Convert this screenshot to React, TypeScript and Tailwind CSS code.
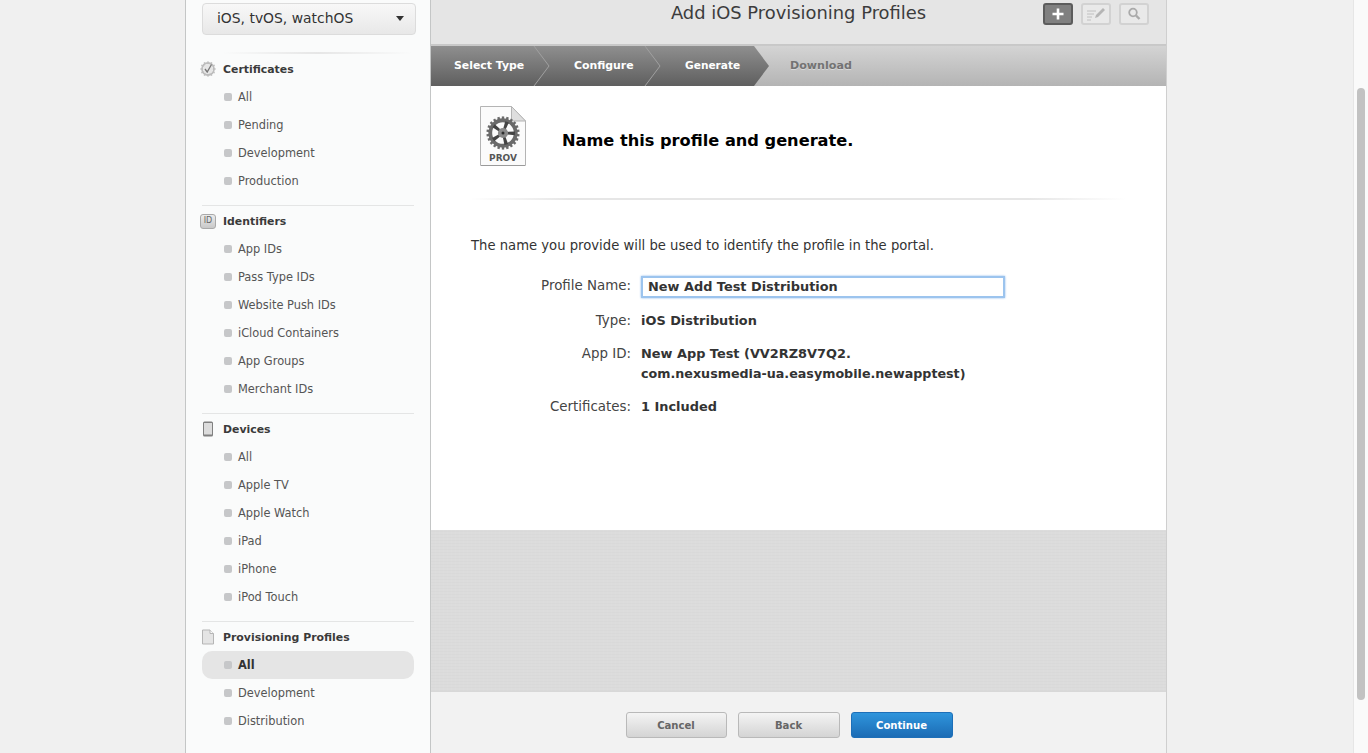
import React from 'react';

const lucida = { fontFamily: '"DejaVu Sans", sans-serif' };

const sections = [
  { title: 'Certificates', icon: 'cert', items: ['All', 'Pending', 'Development', 'Production'] },
  { title: 'Identifiers', icon: 'id', items: ['App IDs', 'Pass Type IDs', 'Website Push IDs', 'iCloud Containers', 'App Groups', 'Merchant IDs'] },
  { title: 'Devices', icon: 'device', items: ['All', 'Apple TV', 'Apple Watch', 'iPad', 'iPhone', 'iPod Touch'] },
  { title: 'Provisioning Profiles', icon: 'doc', items: ['All', 'Development', 'Distribution'] },
];

const Gear: React.FC<{ size: number; ring: string; spoke: string; teeth: number }> = ({ size, ring, spoke, teeth }) => {
  const cogs = Array.from({ length: teeth }, (_, i) => (i * 360) / teeth);
  return (
    <svg width={size} height={size} viewBox="0 0 40 40">
      {cogs.map((a) => (
        <rect key={a} x="18.6" y="0.5" width="2.8" height="6" fill={ring} transform={`rotate(${a} 20 20)`} />
      ))}
      <circle cx="20" cy="20" r="15" fill="none" stroke={ring} strokeWidth="4.5" />
      {[20, 92, 164, 236, 308].map((a) => (
        <path key={a} d="M17.8 6h4.4l-1 14h-2.4z" fill={spoke} transform={`rotate(${a} 20 20)`} />
      ))}
      <circle cx="20" cy="20" r="6" fill="#8a8a8a" />
      <circle cx="20" cy="20" r="1.8" fill="#2e2e2e" />
    </svg>
  );
};

const SectionIcon: React.FC<{ kind: string }> = ({ kind }) => {
  if (kind === 'cert') {
    return (
      <span className="relative flex h-4 w-4 items-center justify-center">
        <Gear size={16} ring="#bdbdbd" spoke="#bdbdbd" teeth={12} />
        <svg className="absolute inset-0" width="16" height="16" viewBox="0 0 16 16">
          <circle cx="8" cy="8" r="5" fill="#e6e6e6" />
          <path d="M5 8l2.2 3L11.5 3.5" fill="none" stroke="#777" strokeWidth="1.3" />
        </svg>
      </span>
    );
  }
  if (kind === 'id') {
    return (
      <span className="flex h-[15px] w-[16px] items-center justify-center rounded-[3px] border border-[#a9a9a9] bg-gradient-to-b from-[#ececec] to-[#c8c8c8] text-[8px] font-normal leading-none text-[#666]">
        ID
      </span>
    );
  }
  if (kind === 'device') {
    return (
      <svg width="16" height="16" viewBox="0 0 16 16">
        <rect x="3" y="0.5" width="10" height="15" rx="1.5" fill="#808080" />
        <rect x="4" y="2" width="8" height="11.5" fill="#dcdcdc" />
      </svg>
    );
  }
  return (
    <svg width="16" height="16" viewBox="0 0 16 16">
      <path d="M2.5 1h7.5l3.5 3.5V15h-11z" fill="#e4e4e4" stroke="#b5b5b5" />
      <path d="M10 1v3.5h3.5" fill="#fafafa" stroke="#b5b5b5" />
    </svg>
  );
};

const Sidebar: React.FC = () => (
  <aside className="w-[246px] shrink-0 border-x border-[#c4c6c6] bg-[#fafbfb] pl-[16px] pr-[16px]">
    <div className="mt-[3px] flex h-[32px] w-[214px] items-center justify-between rounded-[4px] border border-[#dcdcdc] bg-gradient-to-b from-[#f8f8f8] to-[#e8e8e8] pb-[1px] pl-[14px] pr-[11px] text-[13.9px] text-[#333]" style={lucida}>
      <span>iOS, tvOS, watchOS</span>
      <span className="h-0 w-0 border-x-[4.5px] border-t-[5px] border-x-transparent border-t-[#333]" />
    </div>
    <div className="ml-[20px] mt-[17px] h-[2px] w-[190px] bg-gradient-to-r from-transparent via-[#e6e6e6] to-transparent" />
    {sections.map((s, i) => (
      <section key={s.title} className={i < sections.length - 1 ? 'w-[212px] border-b border-[#e4e5e5] pb-[10px] pt-[1px]' : 'w-[212px] pt-[1px]'}>
        <div className="flex h-[28px] items-center text-[10.9px] font-bold text-[#3a3a3a]" style={lucida}>
          <span className="-ml-[2px] mr-[7px] flex w-[16px] justify-center"><SectionIcon kind={s.icon} /></span>
          <span className="pt-[2px]">{s.title}</span>
        </div>
        {s.items.map((item, j) => {
          const active = s.title === 'Provisioning Profiles' && j === 0;
          return (
            <div key={item} className={`flex h-[28px] items-center pl-[22px] text-[11.4px] ${active ? 'rounded-[10px] bg-[#e5e5e5] font-bold text-[#333]' : 'text-[#555]'}`} style={lucida}>
              <span className="mr-[6px] h-[8px] w-[8px] rounded-[2px] bg-[#c6c7c9]" />
              <span className="pt-[2px]">{item}</span>
            </div>
          );
        })}
      </section>
    ))}
  </aside>
);

const Steps: React.FC = () => (
  <div className="relative h-[41px] border-t border-[#c9c9c9] bg-gradient-to-b from-[#d4d4d4] to-[#b4b4b4]">
    <div className="flex h-[40px] w-[338px] items-center bg-gradient-to-b from-[#8f8f8f] to-[#5f5f5f] pl-[23px] text-[10.9px] font-bold text-white [clip-path:polygon(0_0,323px_0,338px_20px,323px_40px,0_40px)]" style={lucida}>
      <span className="w-[120px]">Select Type</span>
      <span className="w-[111px]">Configure</span>
      <span className="text-[10.6px]">Generate</span>
    </div>
    <svg className="absolute left-[102px] top-0" width="18" height="40" viewBox="0 0 18 40">
      <path d="M1 0l15 20L1 40" fill="none" stroke="#a0a0a0" />
    </svg>
    <svg className="absolute left-[213px] top-0" width="18" height="40" viewBox="0 0 18 40">
      <path d="M1 0l15 20L1 40" fill="none" stroke="#a0a0a0" />
    </svg>
    <span className="absolute left-[359px] top-[12px] text-[11.1px] font-bold text-[#737373] [text-shadow:0_1px_0_#d8d8d8]" style={lucida}>Download</span>
  </div>
);

const ToolButton: React.FC<{ active?: boolean; children: React.ReactNode }> = ({ active, children }) => (
  <span className={`flex h-[22px] w-[30px] items-center justify-center rounded-[3px] border-2 ${active ? 'border-[#5c5c5c] bg-[#808080]' : 'border-[#d2d2d2] bg-[#e9e9e9]'}`}>
    {children}
  </span>
);

const Row: React.FC<{ label: string; className?: string; children: React.ReactNode }> = ({ label, className, children }) => (
  <div className={`flex leading-[20px] ${className ?? ''}`} style={lucida}>
    <span className="w-[170px] pr-[10px] text-right text-[13.4px] text-[#444]">{label}</span>
    <div className="text-[12.9px] font-bold text-[#333]">{children}</div>
  </div>
);

const Btn: React.FC<{ primary?: boolean; w: string; children: React.ReactNode }> = ({ primary, w, children }) => (
  <button className={`flex h-[26px] ${w} items-center justify-center rounded-[3px] border pt-[2px] text-[10.1px] font-bold ${primary ? 'border-[#1d6fb8] bg-gradient-to-b from-[#2f95dc] to-[#1c6cb5] text-white' : 'border-[#b9b9b9] bg-gradient-to-b from-[#f4f4f4] to-[#d4d4d4] text-[#666]'}`} style={lucida}>
    {children}
  </button>
);

const ProvIcon: React.FC = () => (
  <div className="relative ml-[9px] h-[60px] w-[46px] shrink-0">
    <svg className="absolute inset-0" width="46" height="60" viewBox="0 0 46 60">
      <path d="M0.5 0.5h31l14 14.5v44.5h-45z" fill="#fbfbfb" stroke="#b4b4b4" />
      <path d="M31.5 0.5v14.5h14z" fill="#dedede" stroke="#b4b4b4" />
      <path d="M1 59.5h44" stroke="#9a9a9a" />
    </svg>
    <span className="absolute left-[6px] top-[10px]"><Gear size={34} ring="#6a6a6a" spoke="#444" teeth={22} /></span>
    <span className="absolute inset-x-0 bottom-[2px] text-center text-[9px] font-bold leading-[12px] text-[#555]" style={lucida}>PROV</span>
  </div>
);

export default function App() {
  return (
    <div className="flex h-[753px] overflow-hidden bg-[#f0f0f0]">
      <div className="w-[185px] shrink-0" />
      <Sidebar />
      <main className="flex w-[736px] shrink-0 flex-col border-r border-[#cfcfcf] bg-white">
        <header className="relative flex h-[45px] shrink-0 justify-center border-b border-[#c8c8c8] bg-[#e5e5e5] pt-[1px]">
          <h1 className="text-[17.9px] leading-[24px] text-[#3c3c3c]" style={lucida}>Add iOS Provisioning Profiles</h1>
          <div className="absolute right-[17px] top-[3px] flex gap-[8px]">
            <ToolButton active>
              <svg width="14" height="14" viewBox="0 0 14 14"><path d="M7 1.5v11M1.5 7h11" stroke="#fff" strokeWidth="2.6" /></svg>
            </ToolButton>
            <ToolButton>
              <svg width="20" height="14" viewBox="0 0 20 14"><path d="M1 4h9M1 7h7M1 10h5M1 13h4" stroke="#c0c0c0" /><path d="M9 11l1-3 7-7 2 2-7 7z" fill="#b5b5b5" /></svg>
            </ToolButton>
            <ToolButton>
              <svg width="14" height="14" viewBox="0 0 14 14"><circle cx="6" cy="5.5" r="3.8" fill="none" stroke="#aaa" strokeWidth="1.8" /><path d="M9 8.5l3.5 3.5" stroke="#aaa" strokeWidth="2.4" /></svg>
            </ToolButton>
          </div>
        </header>
        <Steps />
        <div className="h-[444px] shrink-0 px-[40px]">
          <div className="flex h-[112px] pt-[20px]">
            <ProvIcon />
            <h2 className="ml-[36px] mt-[23px] text-[16.2px] font-bold leading-[24px] text-black" style={lucida}>Name this profile and generate.</h2>
          </div>
          <div className="-ml-[1px] h-[2px] w-[656px] bg-[linear-gradient(to_right,transparent,#e6e6e6_15%,#e6e6e6_85%,transparent)]" />
          <p className="mt-[36px] text-[13.2px] leading-[20px] text-[#333]" style={lucida}>The name you provide will be used to identify the profile in the portal.</p>
          <Row label="Profile Name:" className="mt-[20px]">
            <div className="flex h-[22px] w-[364px] items-center border-2 border-[#9cc4ee] pl-[5px] text-[#333] shadow-[0_0_2px_#8ab8ec]">New Add Test Distribution</div>
          </Row>
          <Row label="Type:" className="mt-[13px]">iOS Distribution</Row>
          <Row label="App ID:" className="mt-[13px]">New App Test (VV2RZ8V7Q2.<br /><span className="text-[12.7px]">com.nexusmedia-ua.easymobile.newapptest)</span></Row>
          <Row label="Certificates:" className="mt-[13px]">1 Included</Row>
        </div>
        <div className="flex-1 bg-[#dcdcdc] bg-[repeating-linear-gradient(0deg,#00000004_0_1px,transparent_1px_3px),repeating-linear-gradient(90deg,#ffffff0a_0_1px,transparent_1px_4px)]" />
        <footer className="flex h-[62px] shrink-0 justify-center gap-[11px] border-t border-[#d8d8d8] bg-[#f2f2f2] pr-[19px] pt-[20px]">
          <Btn w="w-[101px]">Cancel</Btn>
          <Btn w="w-[102px]">Back</Btn>
          <Btn primary w="w-[102px]">Continue</Btn>
        </footer>
      </main>
      <div className="flex-1" />
      <div className="w-[15px] shrink-0 border-l border-[#e6e6e6] bg-[#fafafa] px-[3px] pt-[88px]">
        <div className="h-[612px] w-[8px] rounded-full bg-[#c2c2c2]" />
      </div>
    </div>
  );
}
